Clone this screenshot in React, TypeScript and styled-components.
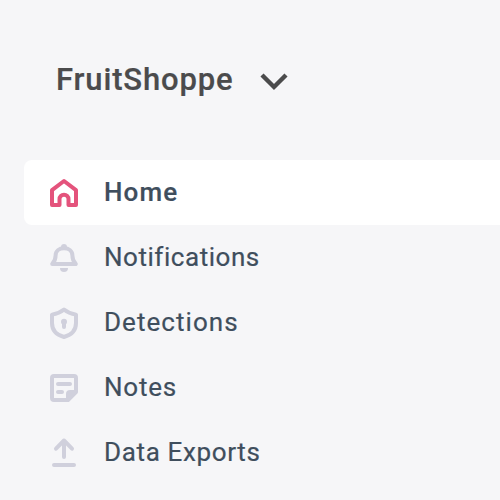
import React from "react";
import styled, { createGlobalStyle } from "styled-components";

const GlobalStyle = createGlobalStyle`
  body {
    margin: 0;
    background: #f6f6f8;
    font-family: Roboto, "Liberation Sans", sans-serif;
    overflow: hidden;
  }
`;

const Sidebar = styled.aside`
  box-sizing: border-box;
  width: 500px;
  height: 500px;
  padding-left: 24px;
  background: #f6f6f8;
  overflow: hidden;
`;

const Header = styled.header`
  display: flex;
  align-items: center;
  height: 160px;
  padding-left: 32px;
`;

const ShopName = styled.h1`
  margin: 0;
  width: 204px;
  color: #4b4b4c;
  font-size: 31px;
  font-weight: 500;
  line-height: 40px;
  letter-spacing: 0.84px;
  -webkit-text-stroke: 0.2px currentColor;
  white-space: nowrap;
`;

const Chevron = styled.svg`
  display: block;
  width: 28px;
  height: 20px;
  margin-top: 3px;
  fill: none;
  stroke: #4b4b4c;
  stroke-width: 4.4;
`;

const Nav = styled.nav`
  display: flex;
  flex-direction: column;
`;

const Item = styled.a<{ $active?: boolean }>`
  display: flex;
  align-items: flex-start;
  box-sizing: border-box;
  height: 65px;
  padding: 17px 0 0 24px;
  gap: 24px;
  border-radius: 8px 0 0 8px;
  color: #3f4e5d;
  background: ${(p) => (p.$active ? "#ffffff" : "transparent")};
  font-weight: ${(p) => (p.$active ? 500 : 400)};
`;

const Icon = styled.svg<{ $active?: boolean }>`
  display: block;
  flex: none;
  width: 32px;
  height: 32px;
  color: ${(p) => (p.$active ? "#e4537c" : "#d0d0dc")};
  fill: none;
  stroke: currentColor;
  stroke-width: 4;
  stroke-linecap: round;
  stroke-linejoin: round;
`;

const Label = styled.span<{ $spacing: number }>`
  font-size: 26px;
  line-height: 31px;
  letter-spacing: ${(p) => p.$spacing}px;
  -webkit-text-stroke: 0.2px currentColor;
  white-space: nowrap;
`;

const items = [
  {
    label: "Home",
    active: true,
    spacing: 1.1,
    icon: (
      <path d="M16 4 4 13.2V28h7.5v-5.8a4.5 4.5 0 0 1 9 0V28H28V13.2Z" />
    ),
  },
  {
    label: "Notifications",
    spacing: 0.54,
    icon: (
      <>
        <path d="M4.2 22C6.8 19.4 7.6 17 7.6 13.5 7.6 9 11 6.2 16 6.2s8.4 2.8 8.4 7.3c0 3.5.8 5.9 3.4 8.5Z" />
        <circle cx="16" cy="5" r="3" fill="currentColor" stroke="none" />
        <path d="M12 26h8a4 4 0 0 1-8 0Z" fill="currentColor" stroke="none" />
      </>
    ),
  },
  {
    label: "Detections",
    spacing: 1.05,
    icon: (
      <>
        <path d="M16 2.5C13 5 9 6.8 4 7.6V16c0 7.5 4.8 12 12 14 7.2-2 12-6.500 12-14V7.600C23 6.800 19 5 16 2.500Z" />
        <circle cx="16" cy="14.7" r="3" fill="currentColor" stroke="none" />
        <path d="M16 15v5" />
      </>
    ),
  },
  {
    label: "Notes",
    spacing: 0.8,
    icon: (
      <>
        <path d="M6 4h20a2 2 0 0 1 2 2v14l-8 8H6a2 2 0 0 1-2-2V6a2 2 0 0 1 2-2Z" />
        <path d="M10 12h12M10 20h4" />
        <path d="M28 18h-6a4 4 0 0 0-4 4v6h3l7-7Z" fill="currentColor" stroke="none" />
      </>
    ),
  },
  {
    label: "Data Exports",
    spacing: 0.65,
    icon: <path d="M6 28h20M16 20V3.5M8 11.700l8-8.200 8 8.200" />,
  },
];

export default function App() {
  return (
    <>
      <GlobalStyle />
      <Sidebar>
        <Header>
          <ShopName>FruitShoppe</ShopName>
          <Chevron viewBox="0 0 28 20" aria-hidden="true">
            <path d="M2 3 14 15l12-12" />
          </Chevron>
        </Header>
        <Nav>
          {items.map(({ label, active, spacing, icon }) => (
            <Item key={label} $active={active}>
              <Icon $active={active} viewBox="0 0 32 32" aria-hidden="true">
                {icon}
              </Icon>
              <Label $spacing={spacing}>{label}</Label>
            </Item>
          ))}
        </Nav>
      </Sidebar>
    </>
  );
}
